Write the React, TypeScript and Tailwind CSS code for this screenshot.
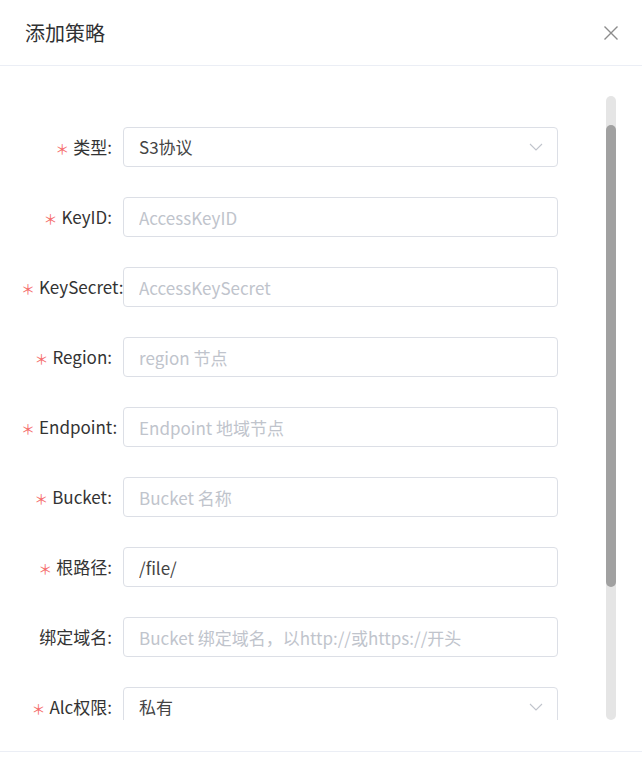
type Field = {
  label: string;
  required?: boolean;
  placeholder?: string;
  value?: string;
  select?: boolean;
};

const fields: Field[] = [
  { label: "类型", required: true, value: "S3协议", select: true },
  { label: "KeyID", required: true, placeholder: "AccessKeyID" },
  { label: "KeySecret", required: true, placeholder: "AccessKeySecret" },
  { label: "Region", required: true, placeholder: "region 节点" },
  { label: "Endpoint", required: true, placeholder: "Endpoint 地域节点" },
  { label: "Bucket", required: true, placeholder: "Bucket 名称" },
  { label: "根路径", required: true, value: "/file/" },
  { label: "绑定域名", placeholder: "Bucket 绑定域名，以http://或https://开头" },
  { label: "Alc权限", required: true, value: "私有", select: true },
];

function Chevron() {
  return (
    <svg width="14" height="8" viewBox="0 0 14 8" fill="none" className="shrink-0">
      <path d="M1 1l6 6 6-6" stroke="#c0c4cc" strokeWidth="1.1" />
    </svg>
  );
}

function CloseIcon() {
  return (
    <svg width="16" height="16" viewBox="0 0 16 16" fill="none">
      <path d="M1.5 1.5l13 13M14.5 1.5l-13 13" stroke="#8c8c8c" strokeWidth="1.4" />
    </svg>
  );
}

function FormRow({ field }: { field: Field }) {
  return (
    <div className="flex items-center h-[40px] shrink-0">
      <label className="block w-[123px] shrink-0 pl-[25px] pr-[11px] text-right whitespace-nowrap text-[17px] leading-[20px] text-[#333]">
        {field.required && (
          <span className="text-[#f56c6c] text-[14px] ml-[-4px] mr-[4px]">＊</span>
        )}
        {field.label}:
      </label>
      {field.select ? (
        <div className="w-[435px] h-[40px] shrink-0 border border-[#dcdfe6] rounded-[4px] pl-[15px] pr-[14px] flex items-center justify-between text-[17px] text-[#444]">
          <span>{field.value}</span>
          <Chevron />
        </div>
      ) : (
        <input
          readOnly
          value={field.value ?? ""}
          placeholder={field.placeholder}
          className="w-[435px] h-[40px] shrink-0 border border-[#dcdfe6] rounded-[4px] px-[15px] text-[17px] text-[#444] placeholder:text-[#c0c4cc] outline-none"
        />
      )}
    </div>
  );
}

export default function App() {
  return (
    <div className="w-[642px] h-[759px] bg-white flex flex-col font-['Noto_Sans_CJK_SC',sans-serif]">
      <div className="h-[66px] shrink-0 flex items-center justify-between pl-[25px] pr-[23px] border-b border-[#ebeef5]">
        <h2 className="text-[20px] text-[#303133]">添加策略</h2>
        <CloseIcon />
      </div>

      <div className="mt-[30px] h-[624px] flex">
        <div className="flex-1 overflow-hidden pt-[31px] flex flex-col gap-[30px]">
          {fields.map((f) => (
            <FormRow key={f.label} field={f} />
          ))}
        </div>
        <div className="w-[10px] mr-[26px] bg-[#e5e5e5] rounded-full pt-[29px]">
          <div className="h-[462px] bg-[#a1a1a1] rounded-full" />
        </div>
      </div>

      <div className="mt-[31px] border-t border-[#ebeef5]" />
    </div>
  );
}
